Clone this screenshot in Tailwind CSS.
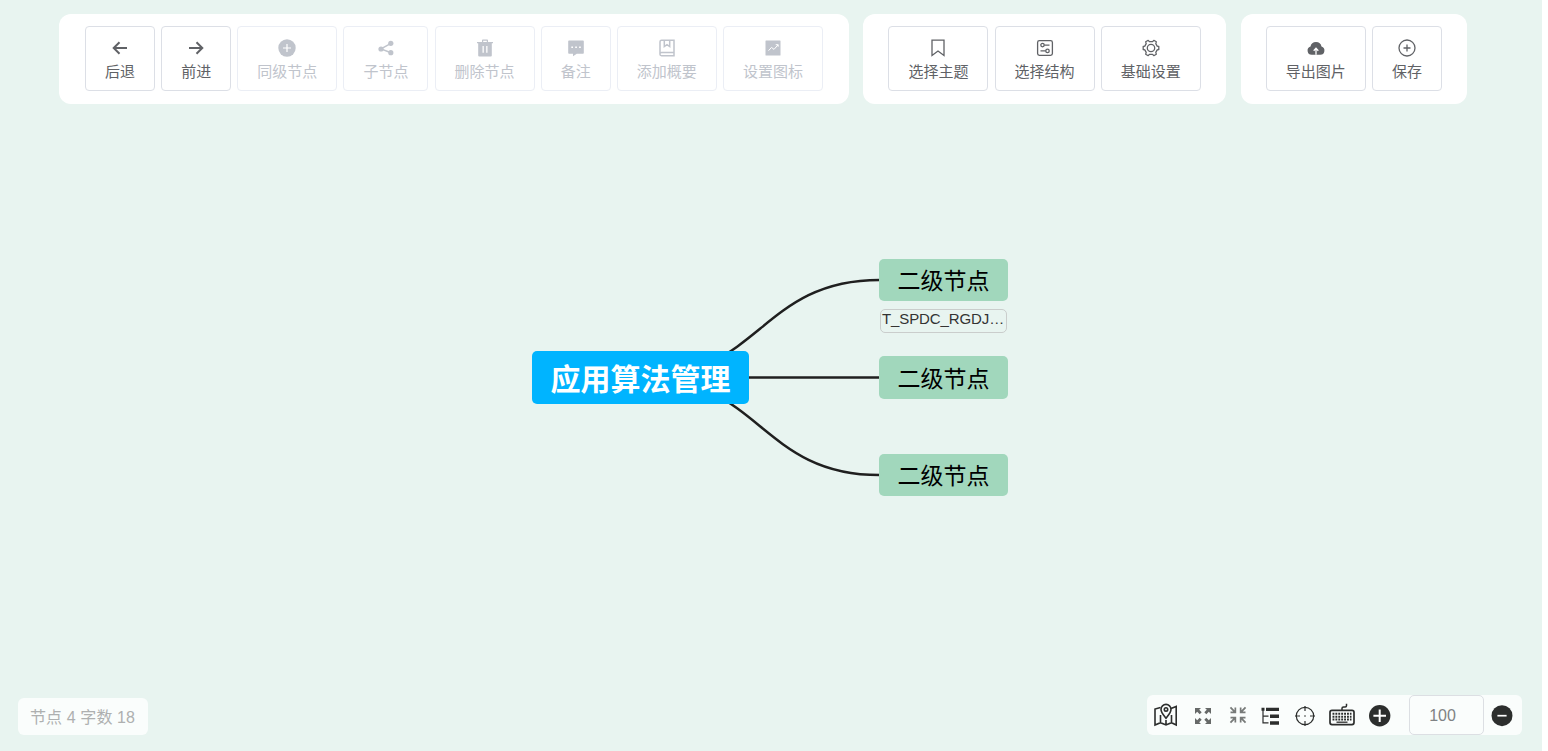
<!DOCTYPE html>
<html lang="zh-CN">
<head>
    <meta charset="UTF-8">
    <meta name="viewport" content="width=device-width, initial-scale=1.0">
    <title>思维导图</title>
    <script src="https://cdn.jsdelivr.net/npm/@tailwindcss/browser@4"></script>
    <style>
        body {
            font-family: 'Liberation Sans', 'Noto Sans CJK SC', sans-serif;
        }
    </style>
</head>
<body class="bg-white h-screen overflow-hidden">
    <div class="relative flex flex-col justify-between w-[1542px] h-[751px] bg-[#e8f4f0]">

        <!-- Mind map canvas -->
        <main class="absolute inset-0">
            <svg class="absolute inset-0" width="1542" height="751" fill="none" stroke="#1f1f1f" stroke-width="2.5">
                <path d="M640.5 377.5C760 377.5 760 280 879.5 280"/>
                <path d="M640.5 377.5H879.5"/>
                <path d="M640.5 377.5C760 377.5 760 475 879.5 475"/>
            </svg>
            <div class="absolute left-[532px] top-[351px] w-[217px] h-[53px] rounded-[5px] bg-[#00b4ff] text-white text-[30px] leading-[58px] font-bold text-center whitespace-nowrap">应用算法管理</div>
            <div class="absolute left-[879px] top-[259px] w-[129px] h-[42px] rounded-[5px] bg-[#a1d7bc] text-black text-[23px] leading-[44px] text-center whitespace-nowrap">二级节点</div>
            <div class="absolute left-[880px] top-[309px] w-[127px] h-[24px] rounded-[5px] border border-[#cacdcc] text-[#333] text-[15px] leading-[18px] pl-px tracking-[-0.1px] whitespace-nowrap">T_SPDC_RGDJ…</div>
            <div class="absolute left-[879px] top-[356.4px] w-[129px] h-[42.2px] rounded-[5px] bg-[#a1d7bc] text-black text-[23px] leading-[46px] text-center whitespace-nowrap">二级节点</div>
            <div class="absolute left-[879px] top-[454px] w-[129px] h-[42px] rounded-[5px] bg-[#a1d7bc] text-black text-[23px] leading-[44px] text-center whitespace-nowrap">二级节点</div>
        </main>

        <!-- Toolbar -->
        <header class="relative flex gap-[14.4px] pl-[59px] pt-3.5 text-[15px] leading-5 text-[#606266]">
            <div class="flex items-start gap-[6.15px] w-[790px] h-[90px] px-[26px] pt-3 rounded-xl bg-white">
                <button class="flex flex-col items-center w-[70px] h-[65px] shrink-0 pt-[11px] rounded-[4px] border border-[#dcdfe6]">
                    <svg class="w-5 h-5" viewBox="0 0 20 20" fill="none" stroke="currentColor" stroke-width="2"><path d="M17 10H4M9.500 4.200 3.700 10l5.800 5.800"/></svg>
                    <span class="mt-1">后退</span>
                </button>
                <button class="flex flex-col items-center w-[70px] h-[65px] shrink-0 pt-[11px] rounded-[4px] border border-[#dcdfe6]">
                    <svg class="w-5 h-5" viewBox="0 0 20 20" fill="none" stroke="currentColor" stroke-width="2"><path d="M3 10h13M10.500 4.200l5.800 5.800-5.800 5.800"/></svg>
                    <span class="mt-1">前进</span>
                </button>
                <button class="flex flex-col items-center w-[100px] h-[65px] shrink-0 pt-[11px] rounded-[4px] border border-[#ebeef5] text-[#c0c4cc]" disabled>
                    <svg class="w-5 h-5" viewBox="0 0 20 20"><circle cx="10" cy="10" r="8.700" fill="currentColor"/><path d="M10 6v8M6 10h8" stroke="#fff" stroke-width="1.200"/></svg>
                    <span class="mt-1">同级节点</span>
                </button>
                <button class="flex flex-col items-center w-[85px] h-[65px] shrink-0 pt-[11px] rounded-[4px] border border-[#ebeef5] text-[#c0c4cc]" disabled>
                    <svg class="w-5 h-5" viewBox="0 0 20 20" fill="currentColor"><path d="m15 5.400-10 5.500 10 3.800" fill="none" stroke="currentColor" stroke-width="1.500"/><circle cx="5" cy="11" r="2.600"/><circle cx="14.800" cy="5.300" r="2.600"/><circle cx="14.800" cy="14.700" r="2.600"/></svg>
                    <span class="mt-1">子节点</span>
                </button>
                <button class="flex flex-col items-center w-[100px] h-[65px] shrink-0 pt-[11px] rounded-[4px] border border-[#ebeef5] text-[#c0c4cc]" disabled>
                    <svg class="w-5 h-5" viewBox="0 0 20 20" fill="currentColor" fill-rule="evenodd"><path d="M7 4V2.200q0-.8.8-.8h4.400q.8 0 .8.800V4h5v1.300h-1.200v12.200q0 1-1 1H4.200q-1 0-1-1V5.300H2V4zm1.200 0h3.600V2.700H8.200zM7.500 8v6.800h1.300V8zm3.700 0v6.800h1.300V8z"/></svg>
                    <span class="mt-1">删除节点</span>
                </button>
                <button class="flex flex-col items-center w-[70px] h-[65px] shrink-0 pt-[11px] rounded-[4px] border border-[#ebeef5] text-[#c0c4cc]" disabled>
                    <svg class="w-5 h-5" viewBox="0 0 20 20"><path d="M3 2.500h14q.8 0 .8.800V15q0 .8-.8.800h-6.200L7 18.200v-2.400H3q-.8 0-.8-.8V3.300q0-.8.8-.8z" fill="currentColor"/><path d="M5.300 8.400h1.700v1.700H5.300zm3.900 0h1.700v1.700H9.200zm3.900 0h1.700v1.700h-1.700z" fill="#fff"/></svg>
                    <span class="mt-1">备注</span>
                </button>
                <button class="flex flex-col items-center w-[100px] h-[65px] shrink-0 pt-[11px] rounded-[4px] border border-[#ebeef5] text-[#c0c4cc]" disabled>
                    <svg class="w-5 h-5" viewBox="0 0 20 20" fill="none" stroke="currentColor" stroke-width="1.500"><path d="M17 14.500H4.500a1.500 1.500 0 0 0 0 3.200H17V2.200H4.500Q3 2.200 3 3.700V16M7.300 2.500v6L10 6.700l2.700 1.800v-6"/></svg>
                    <span class="mt-1">添加概要</span>
                </button>
                <button class="flex flex-col items-center w-[100px] h-[65px] shrink-0 pt-[11px] rounded-[4px] border border-[#ebeef5] text-[#c0c4cc]" disabled>
                    <svg class="w-5 h-5" viewBox="0 0 20 20"><rect x="2.500" y="2.500" width="15" height="15" rx=".5" fill="currentColor"/><path d="m5.500 12.700 3-3.300 2.500 2 4-4.500M12.700 6.700h2.500v2" fill="none" stroke="#fff" stroke-width="1"/></svg>
                    <span class="mt-1">设置图标</span>
                </button>
            </div>

            <div class="flex items-start gap-[6.2px] w-[363px] h-[90px] px-[25px] pt-3 rounded-xl bg-white">
                <button class="flex flex-col items-center w-[100px] h-[65px] shrink-0 pt-[11px] rounded-[4px] border border-[#dcdfe6]">
                    <svg class="w-5 h-5" viewBox="0 0 20 20" fill="none" stroke="currentColor" stroke-width="1.300"><path d="M4 2.200h12v15.300l-6-4.500-6 4.500z"/></svg>
                    <span class="mt-1">选择主题</span>
                </button>
                <button class="flex flex-col items-center w-[100px] h-[65px] shrink-0 pt-[11px] rounded-[4px] border border-[#dcdfe6]">
                    <svg class="w-5 h-5" viewBox="0 0 20 20" fill="none" stroke="currentColor" stroke-width="1.300"><rect x="2.600" y="2.600" width="14.800" height="14.800" rx="1.800"/><circle cx="7.500" cy="7.100" r="1.700"/><circle cx="12.500" cy="12.900" r="1.700"/><path d="M9.200 7.100h5.300M5.500 12.900h5.300"/></svg>
                    <span class="mt-1">选择结构</span>
                </button>
                <button class="flex flex-col items-center w-[100px] h-[65px] shrink-0 pt-[11px] rounded-[4px] border border-[#dcdfe6]">
                    <svg class="w-5 h-5" viewBox="0 0 20 20" fill="none" stroke="currentColor" stroke-width="1.300" stroke-linejoin="round"><circle cx="10" cy="10" r="3.700"/><path d="M7.200 2.300 8.400 3.700h3.200l1.200-1.400 2.500 1.500-.5 1.800 1.400 2.500 1.600.4v3l-1.600.4-1.400 2.500.5 1.800-2.500 1.500-1.200-1.400H8.400l-1.200 1.400-2.500-1.500.5-1.800-1.400-2.500-1.600-.4v-3l1.600-.4 1.400-2.500-.5-1.800z"/></svg>
                    <span class="mt-1">基础设置</span>
                </button>
            </div>

            <div class="flex items-start gap-[6.2px] w-[226px] h-[90px] px-[25px] pt-3 rounded-xl bg-white">
                <button class="flex flex-col items-center w-[100px] h-[65px] shrink-0 pt-[11px] rounded-[4px] border border-[#dcdfe6]">
                    <svg class="w-5 h-5" viewBox="0 0 20 20"><path d="M5.700 16.800A4.200 4.200 0 0 1 4.500 8.600a5.600 5.600 0 0 1 11 0 4.200 4.200 0 0 1-1.200 8.200z" fill="currentColor"/><path d="M10 16.800V11M7.700 12.700 10 10.300l2.300 2.400" fill="none" stroke="#fff" stroke-width="1.300"/></svg>
                    <span class="mt-1">导出图片</span>
                </button>
                <button class="flex flex-col items-center w-[70px] h-[65px] shrink-0 pt-[11px] rounded-[4px] border border-[#dcdfe6]">
                    <svg class="w-5 h-5" viewBox="0 0 20 20" fill="none" stroke="currentColor" stroke-width="1.300"><circle cx="10" cy="10" r="8"/><path d="M10 6.500v7M6.500 10h7"/></svg>
                    <span class="mt-1">保存</span>
                </button>
            </div>
        </header>

        <!-- Bottom bar -->
        <footer class="relative flex justify-between items-center pl-[18px] pr-5 pb-4">
            <div class="flex items-center w-[130px] h-[37px] mt-[3px] pl-3 pt-0.5 rounded-md bg-white/80 text-base tracking-[0.1px] text-[#aeb0b0] whitespace-nowrap">节点 4 字数 18</div>

            <div class="flex items-center w-[375px] h-10 rounded-md bg-white/80 text-[#2c2e2d]">
                <svg class="w-6 h-6 ml-[7px]" viewBox="0 0 24 24" fill="none" stroke="currentColor" stroke-width="1.600"><path d="M6.500 4.500 1 6v16l5.500-2.300 5.500 2.300 5.500-2.300 4.700 2.300V3.500L17 5.500M6.500 12v7.500M17.500 12v7.500M12 17v5"/><path d="M12 15.200C9.500 12 7 9.300 7 6.400a5 5 0 0 1 10 0c0 2.900-2.500 5.600-5 8.800z"/><circle cx="12" cy="6.400" r="1.700"/></svg>
                <svg class="w-[18px] h-[18px] ml-[16px] mt-px text-[#666968]" viewBox="0 0 18 18" fill="currentColor"><path d="M1 1h6L5.200 2.800l2.500 2.500-2 2-2.500-2.500L1 7zM17 1h-6l1.800 1.800-2.500 2.500 2 2 2.500-2.500L17 7zM1 17h6l-1.800-1.800 2.500-2.500-2-2-2.500 2.500L1 11zM17 17h-6l1.800-1.800-2.500-2.500 2-2 2.500 2.500L17 11z"/></svg>
                <svg class="w-[18px] h-[18px] ml-[17px] text-[#777a79]" viewBox="0 0 18 18" fill="currentColor"><path d="M7.200 1.500v5.700H1.500V5.500h2.700L.8 2.100 2.100.8l3.400 3.400V1.500zM10.800 1.500v5.700h5.700V5.500h-2.700l3.400-3.400L15.900.8l-3.400 3.400V1.500zM7.200 16.500v-5.700H1.500v1.700h2.700L.8 15.900l1.300 1.300 3.400-3.400v2.700zM10.800 16.500v-5.700h5.700v1.700h-2.700l3.400 3.400-1.300 1.300-3.400-3.400v2.700z"/></svg>
                <svg class="w-[18px] h-[18px] ml-[14px] mt-px" viewBox="0 0 18 18" fill="currentColor"><path d="M.5.800h3v3h-3zM5 .800h13v3.200H5zM9 7.400h9v3.500H9zM9 14.200h9v3.500H9z"/><path d="M2 3v12.900h5.500M2 9.100h5.500" fill="none" stroke="currentColor" stroke-width="1.200"/></svg>
                <svg class="w-[22px] h-[22px] ml-[15px] mt-px" viewBox="0 0 22 22" fill="none" stroke="currentColor" stroke-width="1.200"><circle cx="11" cy="11" r="8.700"/><path d="M11 1v5M11 16v5M1 11h5M16 11h5"/><circle cx="11" cy="11" r=".8" fill="currentColor" stroke="none"/></svg>
                <svg class="w-[26px] h-6 ml-[13px]" viewBox="0 0 26 24" fill="none" stroke="currentColor"><rect x="1" y="7.300" width="24" height="14.300" rx="2" stroke-width="1.700"/><path d="M13 7V5.200q0-1.200 1.500-1.200h1.700q1.300 0 1.300-1.200V.8" stroke-width="1.500"/><path d="M3.500 10.800h19M3.500 13.800h19M3.500 16.600h19" stroke-width="2" stroke-dasharray="1.900 1"/><path d="M7.500 19.200h11" stroke-width="1.300"/></svg>
                <svg class="w-[22px] h-[22px] ml-[14px] mt-px" viewBox="0 0 22 22"><circle cx="10.700" cy="10.700" r="10.700" fill="currentColor"/><path d="M10.700 4.400v12.600M4.400 10.700h12.600" stroke="#fff" stroke-width="2"/></svg>
                <div class="flex items-center justify-center w-[75px] h-10 ml-[18px] pr-[8px] pt-0.5 rounded-[5px] border border-[#dcdfe3] text-base text-[#7f8284]">100</div>
                <svg class="w-[22px] h-[22px] ml-[7px] mt-px" viewBox="0 0 22 22"><circle cx="11" cy="10.700" r="10.500" fill="currentColor"/><path d="M6.400 10.700h9.200" stroke="#fff" stroke-width="1.700"/></svg>
            </div>
        </footer>
    </div>
</body>
</html>
